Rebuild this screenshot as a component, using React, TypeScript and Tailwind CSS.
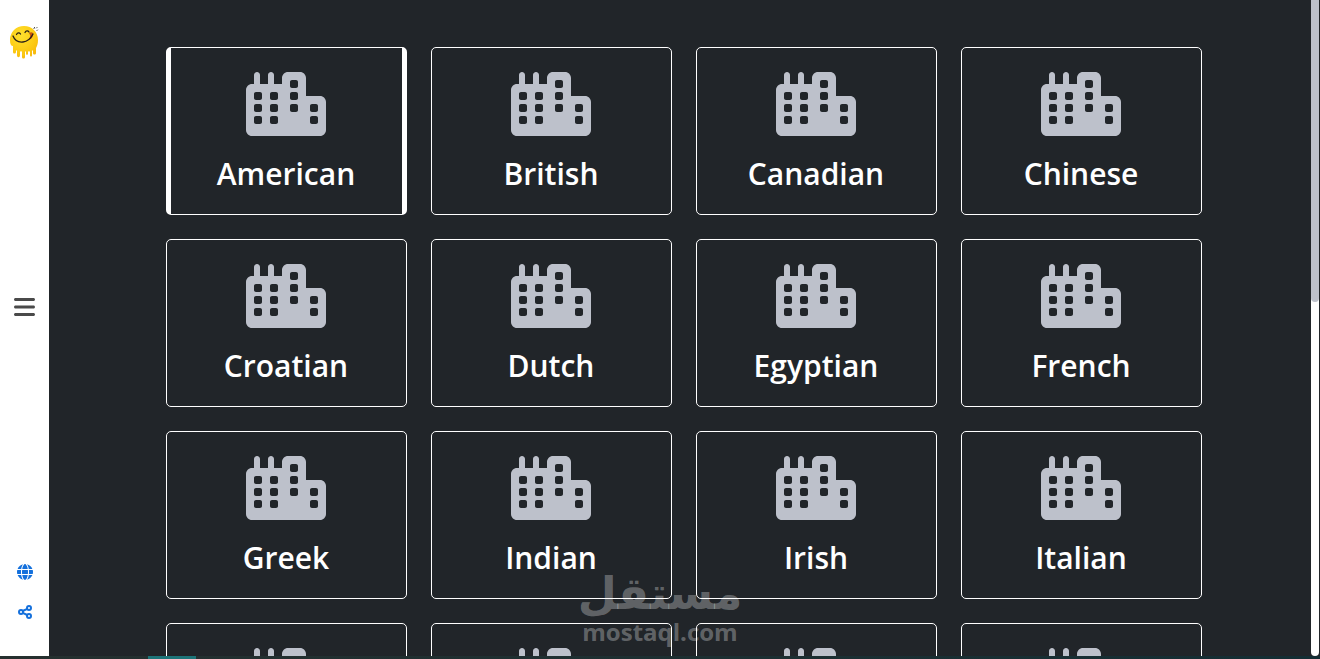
import React from 'react';
import { FaBars, FaCity, FaGlobe } from 'react-icons/fa6';

const areas = [
  'American',
  'British',
  'Canadian',
  'Chinese',
  'Croatian',
  'Dutch',
  'Egyptian',
  'French',
  'Greek',
  'Indian',
  'Irish',
  'Italian',
  'Jamaican',
  'Japanese',
  'Kenyan',
  'Malaysian',
];

const Logo: React.FC = () => (
  <svg viewBox="1 0 30 36" className="w-[30px] h-9" aria-hidden="true">
    <defs>
      <radialGradient id="face" cx="0.4" cy="0.3" r="0.8">
        <stop offset="0" stopColor="#ffe02e" />
        <stop offset="0.6" stopColor="#fccb14" />
        <stop offset="1" stopColor="#f5b40c" />
      </radialGradient>
    </defs>
    <path
      d="M15 2C23 2 29 8 29 16c0 4-1 6-2 8v5c0 2-3 2-3 0v-2c0-1-1-1-1 0v4c0 2-2 2-2 0v-3c0-1-2-1-2 0v2c0 1-2 1-2 0v-2c0-1-1-1-1 0v5c0 2-3 2-3 0v-5c0-1-2-1-2 0v3c0 3-3 3-3 0v-4c0-1-1-1-1 0v1c0 2-3 2-3 0v-6C2 22 1 20 1 16 1 8 7 2 15 2Z"
      fill="url(#face)"
    />
    <circle cx="14.5" cy="31" r="1" fill="#fccb14" />
    <path d="M20 9c3-2 5 0 4 3-1 2-2 3-4 4 1-3 2-4 0-7Z" fill="#c9560b" />
    <path
      d="M4 12c2 5 6 6.500 10 6 5-.5 8-4 10-8M7.500 10.500c1-2 3-2 4-.5M16 8.500c1-2 3-2 4-.5"
      fill="none"
      stroke="#2b2118"
      strokeWidth="1.300"
      strokeLinecap="round"
    />
    <path d="M25 4.500l.5-1M27.500 4l.5-.5M28 6.500l.5-.5" stroke="#333" strokeWidth="1" strokeLinecap="round" />
  </svg>
);

const ShareIcon: React.FC = () => (
  <svg viewBox="0 0 16 16" className="w-4 h-4" fill="none" stroke="currentColor" strokeWidth="2" aria-hidden="true">
    <circle cx="4" cy="7.900" r="2" />
    <circle cx="12" cy="3.900" r="2" />
    <circle cx="12" cy="11.900" r="2" />
    <path d="M5.800 7l4.400-2.200M5.800 8.800l4.400 2.200" />
  </svg>
);

const Sidebar: React.FC = () => (
  <nav className="w-[49px] shrink-0 bg-white flex flex-col items-center justify-between pt-6 pb-9">
    <a href="#home" aria-label="Home">
      <Logo />
    </a>
    <button type="button" aria-label="Open menu" className="text-[#4a4a4a] cursor-pointer">
      <FaBars className="w-[21px] h-6" />
    </button>
    <div className="flex flex-col gap-6 pt-2.5 text-[#1470dc]">
      <a href="#language" aria-label="Language">
        <FaGlobe className="w-4 h-4" />
      </a>
      <a href="#share" aria-label="Share">
        <ShareIcon />
      </a>
    </div>
  </nav>
);

interface AreaCardProps {
  name: string;
  active: boolean;
  onHover: () => void;
}

const AreaCard: React.FC<AreaCardProps> = ({ name, active, onHover }) => (
  <button
    type="button"
    onMouseEnter={onHover}
    className={`flex flex-col items-center rounded-[5px] border-y border-white pt-6 pb-5 cursor-pointer ${
      active ? 'border-x-[5px]' : 'border-x'
    }`}
  >
    <FaCity className="w-20 h-16 text-[#bdc1cb]" />
    <span className="mt-[18px] text-[30px] leading-10 font-semibold text-white">{name}</span>
  </button>
);

export default function App() {
  const [active, setActive] = React.useState('American');

  return (
    <div className="h-screen flex flex-col overflow-hidden bg-[#212529] font-['Open_Sans','Noto_Sans',sans-serif]">
      <div className="relative flex-1 min-h-0 flex">
        <Sidebar />

        <main className="flex-1 min-w-0 overflow-hidden pl-6 pr-[26px]">
          <div className="max-w-[1036px] mx-auto pt-[47px] grid grid-cols-2 md:grid-cols-4 gap-6">
            {areas.map((area) => (
              <AreaCard key={area} name={area} active={area === active} onHover={() => setActive(area)} />
            ))}
          </div>
        </main>

        {/* Scrollbar */}
        <div className="absolute inset-y-0 right-px w-2 bg-white rounded-b-full">
          <div className="h-[46%] bg-[#bdc1cb] rounded-b-full" />
        </div>

        {/* Watermark */}
        <div className="absolute inset-x-0 bottom-2.5 flex flex-col items-center text-white/30 pointer-events-none">
          <span lang="ar" dir="rtl" className="font-['DejaVu_Sans',sans-serif] font-bold text-[45px] leading-[48px]">
            مستقل
          </span>
          <span className="font-['Open_Sans',sans-serif] font-bold text-2xl leading-7">mostaql.com</span>
        </div>
      </div>

      <div className="h-[3px] shrink-0 bg-gradient-to-r from-[#26302f] to-[#142e34] pl-[148px]">
        <div className="w-12 h-full bg-[#1d7478]" />
      </div>
    </div>
  );
}
